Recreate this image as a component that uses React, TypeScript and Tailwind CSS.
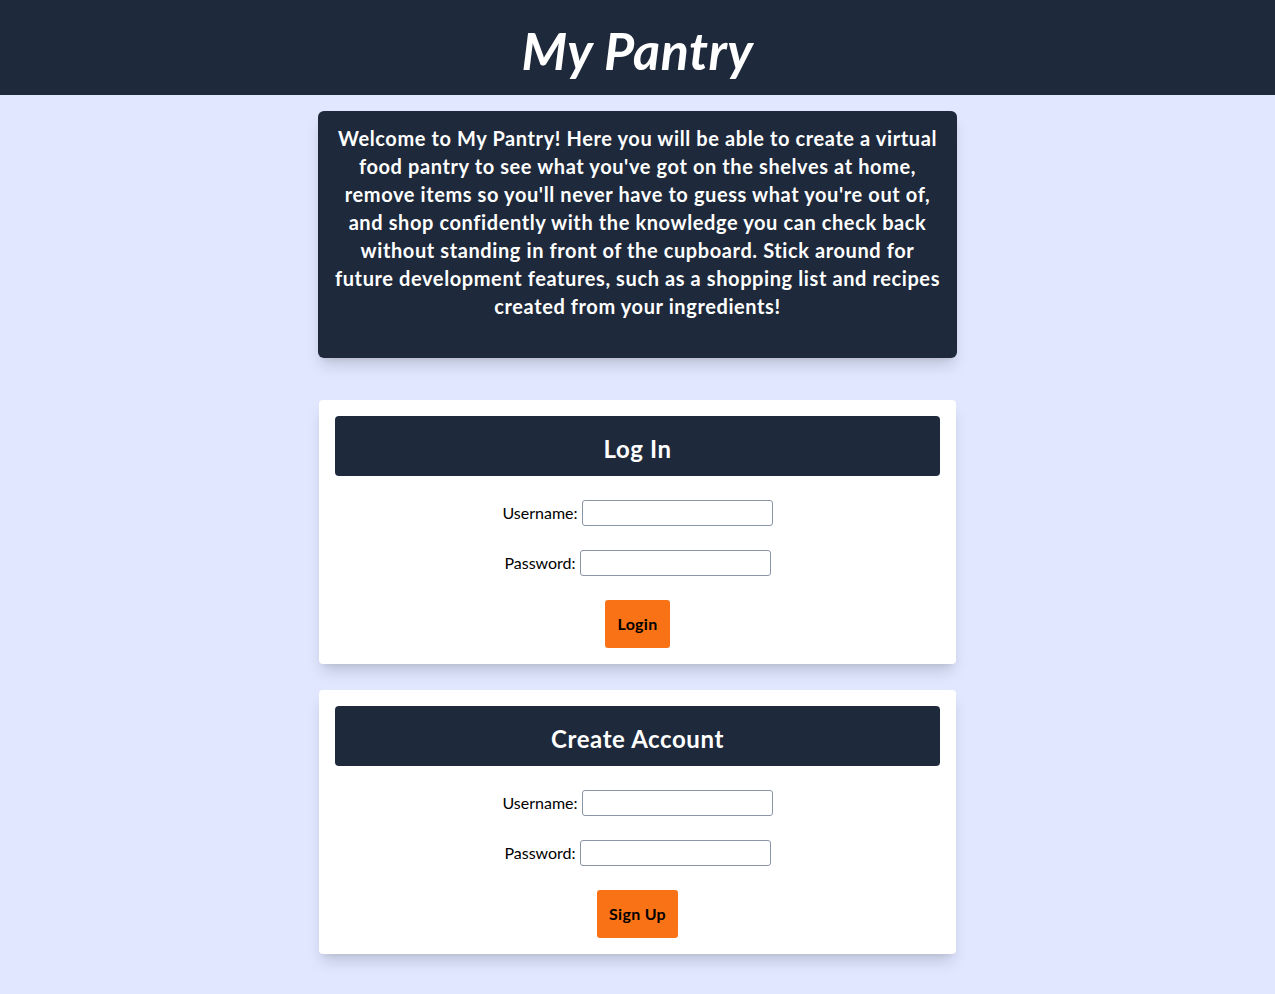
import { useState } from 'react'

const FONT = "font-['Lato','Liberation_Sans',sans-serif]"

function AuthCard({ title, button }: { title: string; button: string }) {
  const [username, setUsername] = useState('')
  const [password, setPassword] = useState('')

  return (
    <form
      className="mx-auto w-[637px] rounded-[4px] bg-white px-4 pb-4 pt-4 shadow-[0_10px_15px_-3px_rgba(0,0,0,0.15),0_4px_6px_-4px_rgba(0,0,0,0.1)]"
      onSubmit={(e) => e.preventDefault()}
    >
      <div className="flex h-[60px] items-center justify-center rounded-[4px] bg-[#1e293b] pt-[6px]">
        <h2 className="text-2xl font-bold tracking-[0.6px] text-white">{title}</h2>
      </div>
      <div className="mt-6 flex items-center justify-center gap-1">
        <label className="text-base text-black">Username:</label>
        <input
          value={username}
          onChange={(e) => setUsername(e.target.value)}
          className="h-[26px] w-[191px] rounded-[3px] border border-[#8a96a8] bg-white px-1"
        />
      </div>
      <div className="mt-6 flex items-center justify-center gap-1">
        <label className="text-base text-black">Password:</label>
        <input
          type="password"
          value={password}
          onChange={(e) => setPassword(e.target.value)}
          className="h-[26px] w-[191px] rounded-[3px] border border-[#8a96a8] bg-white px-1"
        />
      </div>
      <div className="mt-6 flex justify-center">
        <button
          type="submit"
          className="h-12 rounded-[3px] bg-[#f97316] px-3 text-base font-bold tracking-[0.3px] text-black"
        >
          {button}
        </button>
      </div>
    </form>
  )
}

export default function App() {
  return (
    <div className={`min-h-screen bg-[#e0e7ff] pb-10 ${FONT}`}>
      <header className="flex h-[95px] items-center justify-center bg-[#1e293b] pt-[4px]">
        <h1 className="text-[52px] font-bold italic leading-none tracking-[0.5px] text-white">
          My Pantry
        </h1>
      </header>

      <section className="mx-auto mt-4 w-[639px] rounded-md bg-[#1e293b] px-4 pb-[38px] pt-[13px] text-center shadow-[0_10px_15px_-3px_rgba(0,0,0,0.15),0_4px_6px_-4px_rgba(0,0,0,0.1)]">
        <p className="text-xl font-bold leading-7 tracking-[0.6px] text-white">
          Welcome to My Pantry! Here you will be able to create a virtual food pantry to see
          what you've got on the shelves at home, remove items so you'll never have to guess
          what you're out of, and shop confidently with the knowledge you can check back
          without standing in front of the cupboard. Stick around for future development
          features, such as a shopping list and recipes created from your ingredients!
        </p>
      </section>

      <div className="mt-[42px] space-y-[26px]">
        <AuthCard title="Log In" button="Login" />
        <AuthCard title="Create Account" button="Sign Up" />
      </div>
    </div>
  )
}
